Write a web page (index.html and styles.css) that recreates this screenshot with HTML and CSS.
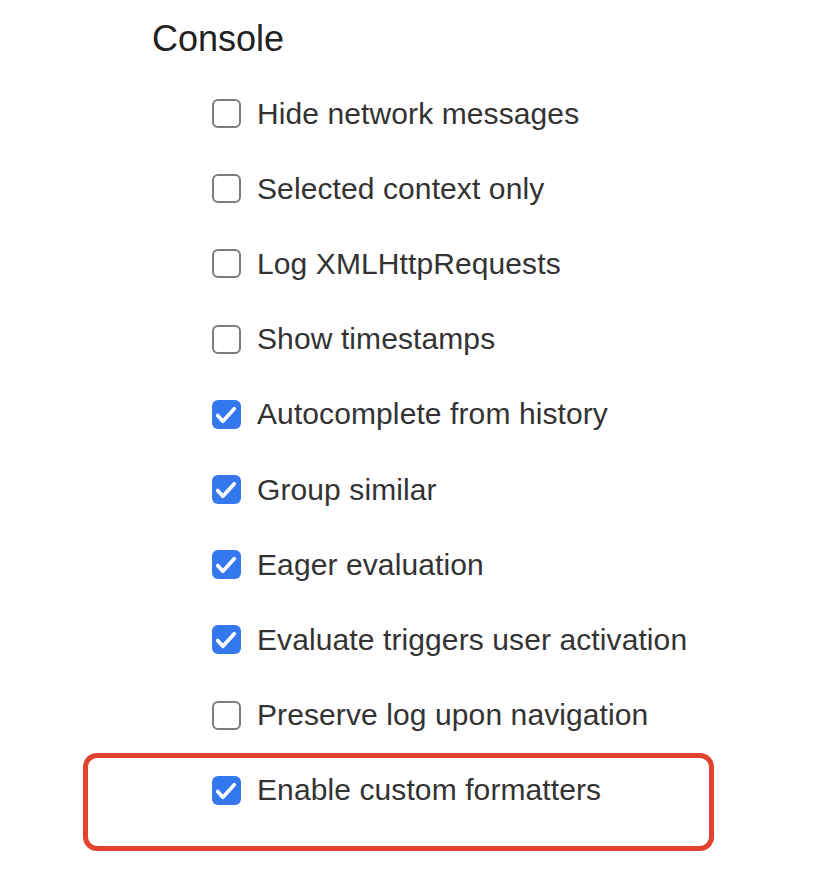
FILE: index.html
```html
<!DOCTYPE html>
<html lang="en">
<head>
<meta charset="utf-8">
<title>Console settings</title>
<link rel="stylesheet" href="styles.css">
</head>
<body>
<main class="panel">
  <h2 class="title">Console</h2>
  <ul class="options">
    <li class="option"><span class="box"></span><span class="label">Hide network messages</span></li>
    <li class="option"><span class="box"></span><span class="label">Selected context only</span></li>
    <li class="option"><span class="box"></span><span class="label">Log XMLHttpRequests</span></li>
    <li class="option"><span class="box"></span><span class="label">Show timestamps</span></li>
    <li class="option"><span class="box checked"><svg viewBox="0 0 28 28"><path d="M5.5 15 L10.5 20.5 L21.5 8.5"/></svg></span><span class="label">Autocomplete from history</span></li>
    <li class="option"><span class="box checked"><svg viewBox="0 0 28 28"><path d="M5.5 15 L10.5 20.5 L21.5 8.5"/></svg></span><span class="label">Group similar</span></li>
    <li class="option"><span class="box checked"><svg viewBox="0 0 28 28"><path d="M5.5 15 L10.5 20.5 L21.5 8.5"/></svg></span><span class="label">Eager evaluation</span></li>
    <li class="option"><span class="box checked"><svg viewBox="0 0 28 28"><path d="M5.5 15 L10.5 20.5 L21.5 8.5"/></svg></span><span class="label">Evaluate triggers user activation</span></li>
    <li class="option"><span class="box"></span><span class="label">Preserve log upon navigation</span></li>
    <li class="option highlight"><span class="box checked"><svg viewBox="0 0 28 28"><path d="M5.5 15 L10.5 20.5 L21.5 8.5"/></svg></span><span class="label">Enable custom formatters</span></li>
  </ul>
</main>
</body>
</html>
```

FILE: styles.css
```css
* { box-sizing: border-box; }
html, body {
  margin: 0;
  padding: 0;
  background: #ffffff;
}
body {
  min-height: 876px;
  font-family: "Liberation Sans", Arial, Helvetica, sans-serif;
  color: #333333;
}
.panel {
  padding-top: 21px;
  padding-bottom: 60px;
}
.title {
  margin: 0;
  padding-left: 152px;
  font-size: 36px;
  line-height: 36px;
  font-weight: 400;
  color: #222222;
}
.options {
  list-style: none;
  margin: 19px 0 0 0;
  padding: 0 0 0 212px;
}
.option {
  height: 75.2px;
  display: flex;
  align-items: center;
  gap: 16px;
}
.box {
  width: 29px;
  height: 29px;
  flex: 0 0 29px;
  border: 2px solid #7c7c7c;
  border-radius: 6px;
  background: #ffffff;
  display: flex;
  align-items: center;
  justify-content: center;
}
.box.checked {
  border: none;
  background: #3478f0;
}
.box svg {
  width: 29px;
  height: 29px;
}
.box svg path {
  fill: none;
  stroke: #ffffff;
  stroke-width: 3.6;
  stroke-linecap: round;
  stroke-linejoin: round;
}
.label {
  font-size: 30px;
  line-height: 30px;
  letter-spacing: 0.1px;
  color: #333333;
}
.highlight {
  position: relative;
}
.highlight::after {
  content: "";
  position: absolute;
  left: -129px;
  top: 0;
  width: 621px;
  height: 88px;
  border: 5.5px solid #e2432e;
  border-radius: 14px;
  pointer-events: none;
}
```
